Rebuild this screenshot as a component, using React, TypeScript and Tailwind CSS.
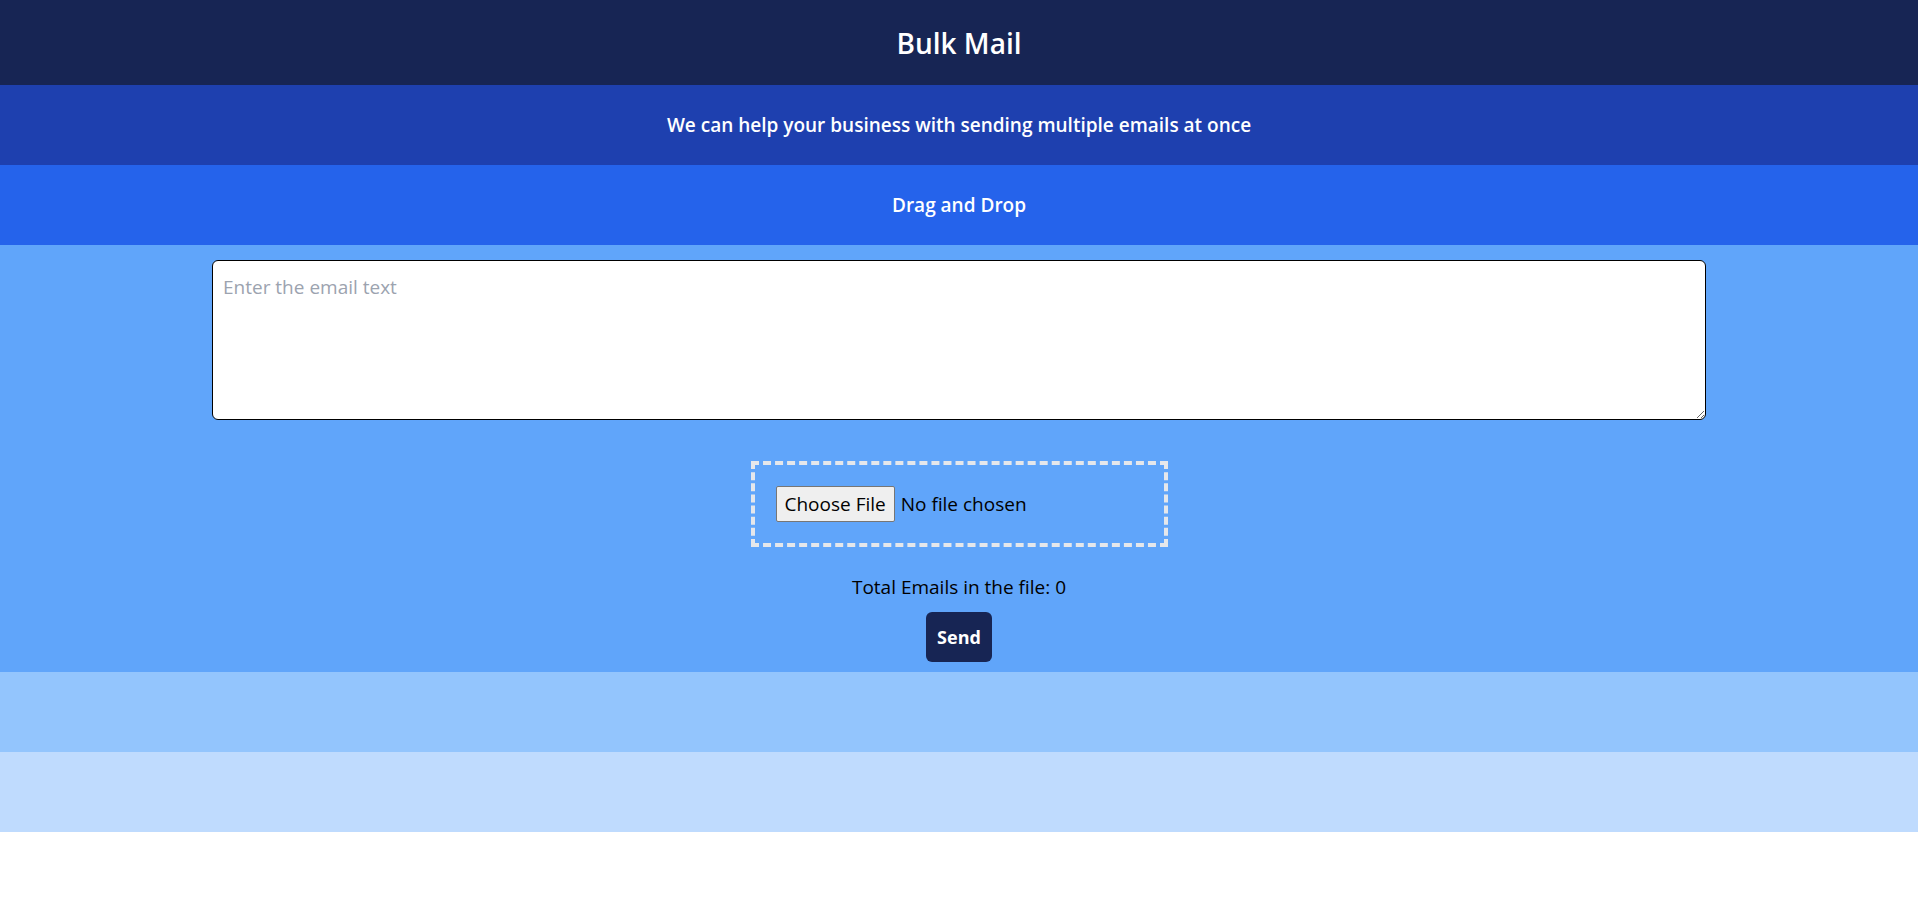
import React from "react";

export default function App() {
  return (
    <div className="w-full font-['Segoe_UI','Open_Sans',sans-serif] text-black">
      <header className="h-[85px] bg-[#172554] flex items-center justify-center">
        <h1 className="text-white text-[28px] leading-9 font-semibold">Bulk Mail</h1>
      </header>
      <div className="h-20 bg-[#1e40af] flex items-center justify-center">
        <p className="text-white text-[19px] leading-7 font-semibold">
          We can help your business with sending multiple emails at once
        </p>
      </div>
      <div className="h-20 bg-[#2563eb] flex items-center justify-center">
        <p className="text-white text-[19px] leading-7 font-semibold">Drag and Drop</p>
      </div>
      <div className="bg-[#60a5fa] flex flex-col items-center pt-[15px] pb-2.5">
        <textarea
          className="w-[1494px] h-40 border border-black rounded-md bg-white px-2.5 pt-3 pb-2.5 text-[19px] leading-7 outline-none placeholder:text-[#9ca3af]"
          placeholder="Enter the email text"
        />
        <div className="mt-[41px] w-[417px] h-[86px] border-4 border-dashed border-[#e5e7eb] flex items-center pl-[21px]">
          <input
            type="file"
            className="text-[19px] leading-7 text-black file:bg-[#efefef] file:border file:border-[#767676] file:rounded-[2px] file:px-2 file:py-[3px] file:mr-1.5 file:text-black"
          />
        </div>
        <p className="mt-[26px] text-[19px] leading-7">Total Emails in the file: 0</p>
        <button className="mt-[11px] h-[50px] px-[11px] bg-[#172554] text-white text-lg font-bold rounded-md">
          Send
        </button>
      </div>
      <div className="h-20 bg-[#93c5fd]" />
      <div className="h-20 bg-[#bfdbfe]" />
    </div>
  );
}
